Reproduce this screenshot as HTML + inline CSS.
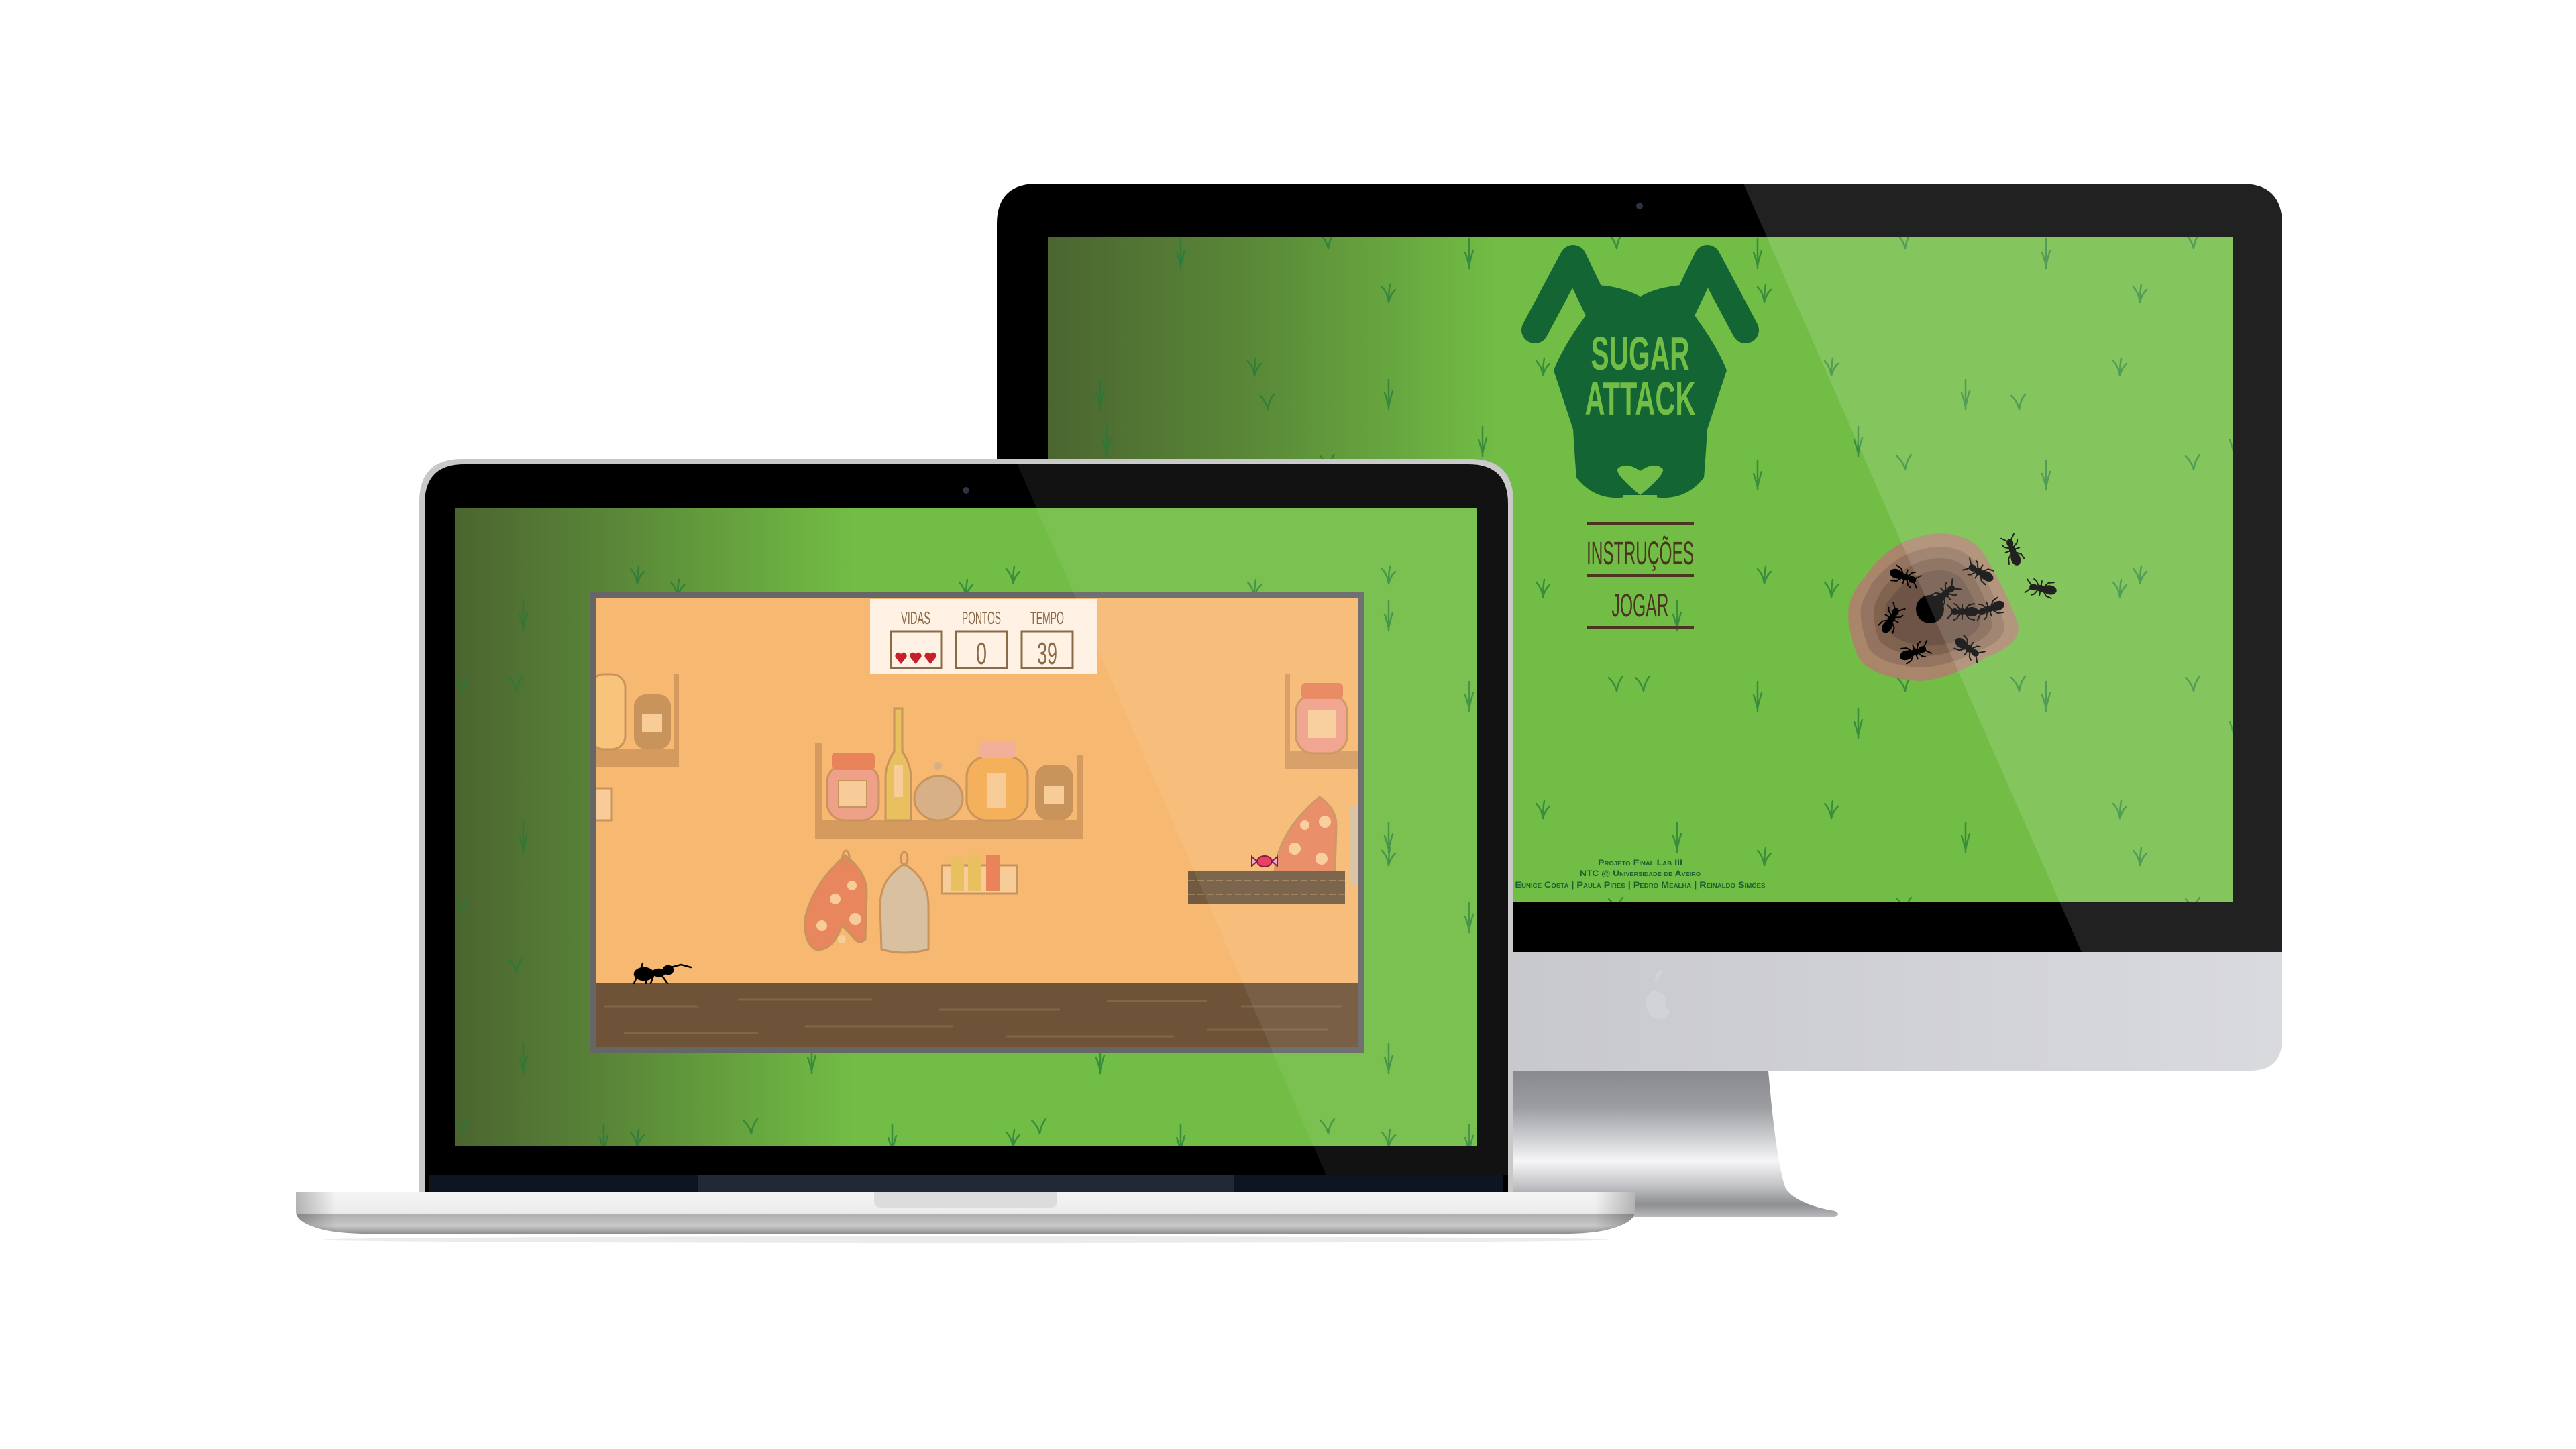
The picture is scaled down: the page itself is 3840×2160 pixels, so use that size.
<!DOCTYPE html>
<html><head><meta charset="utf-8"><style>
html,body{margin:0;padding:0;background:#fff;}
svg{display:block;}
text{font-family:"Liberation Sans",sans-serif;}
</style></head><body>
<svg width="3840" height="2160" viewBox="0 0 3840 2160" xmlns="http://www.w3.org/2000/svg">
<defs>
  <linearGradient id="gI" x1="1562" x2="3327" y1="0" y2="0" gradientUnits="userSpaceOnUse">
    <stop offset="0" stop-color="#4b6530"/><stop offset="0.18" stop-color="#5a8a38"/><stop offset="0.38" stop-color="#72bd45"/><stop offset="1" stop-color="#72bd45"/>
  </linearGradient>
  <linearGradient id="gL" x1="679" x2="2201" y1="0" y2="0" gradientUnits="userSpaceOnUse">
    <stop offset="0" stop-color="#4b6530"/><stop offset="0.18" stop-color="#5c8c39"/><stop offset="0.39" stop-color="#72bd45"/><stop offset="1" stop-color="#72bd45"/>
  </linearGradient>
  <linearGradient id="chin" x1="0" x2="1" y1="0" y2="0">
    <stop offset="0" stop-color="#bcbdc1"/><stop offset="1" stop-color="#d9dade"/>
  </linearGradient>
  <linearGradient id="stand" x1="0" x2="0" y1="1596" y2="1813" gradientUnits="userSpaceOnUse">
    <stop offset="0" stop-color="#88898d"/><stop offset="0.25" stop-color="#9c9da1"/><stop offset="0.5" stop-color="#d6d7da"/><stop offset="0.62" stop-color="#f6f6f8"/><stop offset="0.8" stop-color="#bfc0c3"/><stop offset="0.92" stop-color="#8e8f93"/><stop offset="1" stop-color="#b8b8bb"/>
  </linearGradient>
  <linearGradient id="base" x1="0" x2="0" y1="1777" y2="1840" gradientUnits="userSpaceOnUse">
    <stop offset="0" stop-color="#f4f4f4"/><stop offset="0.5" stop-color="#ececec"/><stop offset="0.53" stop-color="#b0b0b0"/><stop offset="0.8" stop-color="#c8c8c8"/><stop offset="1" stop-color="#8a8a8a"/>
  </linearGradient>
  <linearGradient id="baseSide" x1="441" x2="2437" y1="0" y2="0" gradientUnits="userSpaceOnUse">
    <stop offset="0" stop-color="#000" stop-opacity="0.25"/><stop offset="0.03" stop-color="#000" stop-opacity="0"/><stop offset="0.97" stop-color="#000" stop-opacity="0"/><stop offset="1" stop-color="#000" stop-opacity="0.25"/>
  </linearGradient>
  <g id="b1" fill="none" stroke="#1f7a3a" stroke-width="2.5" stroke-linecap="round">
    <path d="M0 0 L0 -44 M0 -4 Q-3 -16 -6 -24 M0 -4 Q3 -18 6 -27"/>
  </g>
  <g id="b2" fill="none" stroke="#1f7a3a" stroke-width="2.5" stroke-linecap="round">
    <path d="M0 0 Q-3 -12 -12 -20 M0 0 Q2 -14 9 -22"/>
  </g>
  <g id="b3" fill="none" stroke="#1f7a3a" stroke-width="2.5" stroke-linecap="round">
    <path d="M0 0 Q-2 -14 -10 -22 M0 0 Q0 -16 2 -26 M0 0 Q3 -12 10 -18"/>
  </g>
  <pattern id="grass" x="0" y="0" width="430" height="330" patternUnits="userSpaceOnUse">
    <use href="#b1" x="40" y="70"/><use href="#b2" x="260" y="40"/><use href="#b3" x="150" y="230"/><use href="#b1" x="350" y="280"/>
  </pattern>
  <pattern id="grass2" x="110" y="60" width="560" height="420" patternUnits="userSpaceOnUse">
    <use href="#b2" x="100" y="130"/><use href="#b1" x="420" y="200"/><use href="#b3" x="280" y="390"/>
  </pattern>
  <g id="ant" fill="#000" stroke="#000" stroke-width="2" stroke-linecap="round">
    <ellipse cx="-14" cy="0" rx="9" ry="6"/><ellipse cx="0" cy="0" rx="6" ry="4"/><ellipse cx="11" cy="0" rx="5" ry="4"/>
    <path d="M-2 0 L-10 -10 L-18 -12 M-2 0 L-10 10 L-18 12 M0 0 L0 -11 M0 0 L0 11 M2 0 L8 -10 L12 -12 M2 0 L8 10 L12 12 M14 -2 L22 -10 M14 2 L22 10" fill="none"/>
  </g>
  <clipPath id="cI"><path d="M1546 274 H3342 Q3402 274 3402 334 V1419 H1486 V334 Q1486 274 1546 274 Z"/></clipPath>
  <clipPath id="cL"><path d="M689 688 H2192 Q2252 688 2252 748 V1777 H629 V748 Q629 688 689 688 Z"/></clipPath>
  <clipPath id="cIS"><rect x="1562" y="353" width="1766" height="992"/></clipPath>
  <clipPath id="cG"><rect x="889" y="891" width="1135" height="670"/></clipPath>
</defs>

<path d="M2253 1596 L2636 1596 Q2648 1735 2662 1772 Q2680 1796 2735 1805 Q2745 1810 2735 1814 L2253 1814 Z" fill="url(#stand)"/>
<path d="M1486 1400 H3402 V1548 Q3402 1596 3354 1596 H1534 Q1486 1596 1486 1548 Z" fill="url(#chin)"/>
<path d="M2466 1465 q10 -8 13 -20 q-12 2 -13 20 z M2462 1478 q-14 8 -5 30 q8 14 15 10 q10 4 18 -10 q-12 -8 -6 -20 q-8 -12 -22 -10 z" fill="#d2d3d7"/>
<path d="M1546 274 H3342 Q3402 274 3402 334 V1419 H1486 V334 Q1486 274 1546 274 Z" fill="#000"/>
<circle cx="2444" cy="307" r="5" fill="#2a3340"/>
<rect x="1562" y="353" width="1766" height="992" fill="url(#gI)"/>
<g clip-path="url(#cIS)">
  <rect x="1562" y="353" width="1766" height="992" fill="url(#grass)" opacity="0.7"/>
  <rect x="1562" y="353" width="1766" height="992" fill="url(#grass2)" opacity="0.7"/>
  <path d="M2288 492 L2345 385 L2382 462" fill="none" stroke="#146534" stroke-width="40" stroke-linecap="round" stroke-linejoin="round"/>
  <path d="M2602 492 L2545 385 L2508 462" fill="none" stroke="#146534" stroke-width="40" stroke-linecap="round" stroke-linejoin="round"/>
  <path d="M2383 425 Q2420 428 2445 442 Q2470 428 2507 425 L2515 455 Q2560 515 2574 552 L2545 640 Q2542 690 2540 712 Q2510 750 2460 740 L2430 740 Q2380 750 2350 712 Q2348 690 2345 640 L2316 552 Q2330 515 2375 455 Z" fill="#146534"/>
  <path d="M2445 738 Q2405 705 2412 698 Q2425 688 2445 702 Q2465 688 2478 698 Q2485 705 2445 738 Z" fill="#72bd45"/>
  <rect x="2420" y="738" width="50" height="10" fill="#72bd45"/>
  <text x="2445" y="551" text-anchor="middle" font-size="70" font-weight="bold" fill="#72bd45" textLength="147" lengthAdjust="spacingAndGlyphs">SUGAR</text>
  <text x="2445" y="618" text-anchor="middle" font-size="70" font-weight="bold" fill="#72bd45" textLength="165" lengthAdjust="spacingAndGlyphs">ATTACK</text>
  <rect x="2365" y="778" width="160" height="4" fill="#4b3520"/>
  <rect x="2365" y="856" width="160" height="4" fill="#4b3520"/>
  <rect x="2365" y="933" width="160" height="4" fill="#4b3520"/>
  <text x="2445" y="841" text-anchor="middle" font-size="48" fill="#4b3520" textLength="160" lengthAdjust="spacingAndGlyphs">INSTRUÇÕES</text>
  <text x="2445" y="919" text-anchor="middle" font-size="48" fill="#4b3520" textLength="85" lengthAdjust="spacingAndGlyphs">JOGAR</text>
  <path d="M2780 860 Q2820 800 2890 795 Q2940 795 2960 830 Q2990 880 3008 930 Q3015 960 2960 980 Q2900 1015 2860 1015 Q2790 1010 2770 980 Q2750 930 2757 900 Q2765 875 2780 860 Z" fill="#a9866a"/>
  <path d="M2790 870 Q2830 818 2890 815 Q2930 815 2950 845 Q2975 890 2988 930 Q2990 955 2950 970 Q2900 995 2860 995 Q2800 990 2785 965 Q2770 925 2775 900 Z" fill="#947460"/>
  <path d="M2805 880 Q2840 835 2890 832 Q2925 832 2942 860 Q2962 895 2970 930 Q2968 950 2935 962 Q2895 980 2860 978 Q2812 972 2800 952 Q2790 920 2795 900 Z" fill="#80634f"/>
  <path d="M2820 890 Q2850 852 2890 850 Q2920 850 2932 875 Q2950 905 2952 930 Q2945 948 2920 955 Q2890 965 2860 962 Q2825 955 2815 940 Q2808 915 2812 900 Z" fill="#6e5446"/>
  <circle cx="2877" cy="908" r="21" fill="#000"/>
  <use href="#ant" transform="translate(2840,860) rotate(20)"/>
  <use href="#ant" transform="translate(2820,922) rotate(-60)"/>
  <use href="#ant" transform="translate(2900,885) rotate(-40)"/>
  <use href="#ant" transform="translate(2925,912) rotate(180)"/>
  <use href="#ant" transform="translate(2965,908) rotate(160)"/>
  <use href="#ant" transform="translate(2855,972) rotate(-20)"/>
  <use href="#ant" transform="translate(2935,967) rotate(35)"/>
  <use href="#ant" transform="translate(2950,852) rotate(-150)"/>
  <use href="#ant" transform="translate(3000,820) rotate(-110)"/>
  <use href="#ant" transform="translate(3042,877) rotate(-170)"/>
  <g font-size="12" font-weight="bold" fill="#1a5f2f" text-anchor="middle" style="font-variant:small-caps">
    <text x="2445" y="1290" textLength="126" lengthAdjust="spacingAndGlyphs">Projeto Final Lab III</text>
    <text x="2445" y="1306" textLength="180" lengthAdjust="spacingAndGlyphs">NTC @ Universidade de Aveiro</text>
    <text x="2445" y="1323" textLength="373" lengthAdjust="spacingAndGlyphs">Eunice Costa | Paula Pires | Pedro Mealha | Reinaldo Simões</text>
  </g>
</g>
<polygon points="2599,274 3402,274 3402,1419 3103,1419" fill="#fff" opacity="0.13" clip-path="url(#cI)"/>

<path d="M689 684 H2192 Q2256 684 2256 748 V1780 H625 V748 Q625 684 689 684 Z" fill="#c8c8c8"/>
<path d="M692 692 H2189 Q2248 692 2248 751 V1777 H633 V751 Q633 692 692 692 Z" fill="#000"/>
<rect x="640" y="1752" width="1601" height="25" fill="#0d1620"/>
<rect x="1040" y="1752" width="800" height="25" fill="#212934"/>
<circle cx="1440" cy="731" r="5" fill="#2a3340"/>
<rect x="679" y="757" width="1522" height="952" fill="url(#gL)"/>
<rect x="679" y="757" width="1522" height="952" fill="url(#grass)" opacity="0.7"/>
<rect x="679" y="757" width="1522" height="952" fill="url(#grass2)" opacity="0.7"/>

<rect x="880" y="882" width="1153" height="688" fill="#666"/>
<rect x="889" y="891" width="1135" height="670" fill="#f7b872"/>
<g clip-path="url(#cG)">
  <rect x="880" y="1117" width="132" height="26" fill="#d49a5e"/>
  <rect x="1004" y="1005" width="8" height="115" fill="#d49a5e"/>
  <rect x="880" y="1005" width="52" height="112" rx="20" fill="#f8c47c" stroke="#c9935c" stroke-width="3"/>
  <rect x="945" y="1035" width="55" height="82" rx="18" fill="#c9935c"/>
  <rect x="957" y="1065" width="30" height="26" fill="#f8cc98"/>
  <rect x="880" y="1175" width="32" height="48" fill="#f8cc98" stroke="#c9935c" stroke-width="3"/>
  <rect x="1215" y="1223" width="400" height="27" fill="#d49a5e"/>
  <rect x="1215" y="1108" width="10" height="118" fill="#d49a5e"/>
  <rect x="1605" y="1125" width="10" height="100" fill="#d49a5e"/>
  <rect x="1233" y="1140" width="77" height="83" rx="26" fill="#efa088" stroke="#c9935c" stroke-width="3"/>
  <rect x="1240" y="1122" width="64" height="26" rx="6" fill="#e8835a"/>
  <rect x="1250" y="1163" width="42" height="40" fill="#f8cc98" stroke="#c9935c" stroke-width="2"/>
  <path d="M1333 1056 L1345 1056 L1345 1120 Q1358 1140 1358 1160 L1358 1223 L1320 1223 L1320 1160 Q1320 1140 1333 1120 Z" fill="#e8c060" stroke="#c9935c" stroke-width="3"/>
  <rect x="1332" y="1140" width="14" height="48" fill="#f8cc98"/>
  <ellipse cx="1399" cy="1190" rx="36" ry="33" fill="#d8b088" stroke="#c9935c" stroke-width="3"/>
  <circle cx="1398" cy="1142" r="6" fill="#d8b088"/>
  <rect x="1441" y="1128" width="91" height="95" rx="30" fill="#f5b05c" stroke="#c9935c" stroke-width="3"/>
  <rect x="1460" y="1105" width="54" height="25" rx="6" fill="#f2b098"/>
  <rect x="1472" y="1152" width="28" height="52" fill="#f8cc98"/>
  <rect x="1543" y="1140" width="57" height="83" rx="20" fill="#c9935c"/>
  <rect x="1556" y="1172" width="30" height="26" fill="#f8cc98"/>
  <path d="M1260 1275 Q1292 1300 1292 1330 L1290 1400 Q1280 1410 1270 1395 L1255 1380 Q1240 1420 1215 1415 Q1198 1405 1200 1370 Q1210 1320 1260 1275 Z" fill="#e8875e" stroke="#c9935c" stroke-width="3"/>
  <g fill="#f8cc98"><circle cx="1245" cy="1340" r="8"/><circle cx="1270" cy="1320" r="7"/><circle cx="1225" cy="1380" r="8"/><circle cx="1275" cy="1370" r="9"/><circle cx="1255" cy="1400" r="6"/></g>
  <ellipse cx="1261" cy="1278" rx="5" ry="10" fill="none" stroke="#c9935c" stroke-width="3"/>
  <path d="M1348 1288 Q1384 1310 1384 1350 L1384 1415 Q1348 1425 1314 1415 L1312 1350 Q1312 1310 1348 1288 Z" fill="#d9c0a0" stroke="#c9935c" stroke-width="3"/>
  <ellipse cx="1348" cy="1280" rx="5" ry="10" fill="none" stroke="#c9935c" stroke-width="3"/>
  <rect x="1404" y="1290" width="112" height="42" fill="#f8cc98" stroke="#c9935c" stroke-width="3"/>
  <rect x="1417" y="1278" width="20" height="50" fill="#e8c060"/><rect x="1443" y="1275" width="20" height="53" fill="#e8c060"/><rect x="1470" y="1275" width="20" height="53" fill="#e8835a"/>
  <rect x="1915" y="1120" width="115" height="26" fill="#d49a5e"/>
  <rect x="1915" y="1004" width="8" height="118" fill="#d49a5e"/>
  <rect x="1932" y="1035" width="76" height="88" rx="26" fill="#efa088" stroke="#c9935c" stroke-width="3"/>
  <rect x="1940" y="1018" width="62" height="24" rx="6" fill="#e8835a"/>
  <rect x="1950" y="1058" width="42" height="42" fill="#f8cc98"/>
  <path d="M1967 1188 Q1992 1205 1992 1230 L1990 1300 L1900 1300 Q1905 1240 1967 1188 Z" fill="#e8875e" stroke="#c9935c" stroke-width="3"/>
  <g fill="#f8cc98"><circle cx="1945" cy="1230" r="7"/><circle cx="1975" cy="1225" r="9"/><circle cx="1930" cy="1265" r="9"/><circle cx="1970" cy="1280" r="9"/></g>
  <rect x="2012" y="1200" width="20" height="120" rx="10" fill="#d9c0a0"/>
  <rect x="880" y="1466" width="1150" height="100" fill="#6e5339"/>
  <g stroke="#8a6a48" stroke-width="3" fill="none" opacity="0.8">
    <path d="M900 1500 h140 M1100 1490 h200 M1400 1505 h180 M1650 1492 h150 M1850 1500 h150 M930 1540 h200 M1200 1530 h220 M1500 1545 h250 M1800 1535 h180"/>
  </g>
  <rect x="1771" y="1299" width="234" height="48" fill="#715a40"/>
  <path d="M1771 1313 h234 M1771 1333 h234" stroke="#9a7c5a" stroke-width="2" stroke-dasharray="10 4"/>
  <ellipse cx="1885" cy="1284" rx="11" ry="8" fill="#e8325a" stroke="#7a1030" stroke-width="2"/>
  <path d="M1874 1284 L1866 1277 L1866 1291 Z M1896 1284 L1904 1277 L1904 1291 Z" fill="#e8a8e0" stroke="#7a1030" stroke-width="2"/>
  <g fill="#000" stroke="#000" stroke-width="2.5" stroke-linecap="round">
    <ellipse cx="960" cy="1452" rx="14" ry="9"/><ellipse cx="982" cy="1450" rx="9" ry="5"/><ellipse cx="996" cy="1446" rx="7" ry="6"/>
    <path d="M950 1455 L945 1466 M962 1456 L963 1466 M975 1452 L970 1466 M985 1452 L995 1466 M1000 1442 L1015 1438 L1030 1442 M955 1445 L958 1436" fill="none"/>
  </g>
  <rect x="1297" y="893" width="339" height="112" fill="#fff1e3"/>
  <g font-size="26" fill="#8a6a48" text-anchor="middle">
    <text x="1365" y="930" textLength="44" lengthAdjust="spacingAndGlyphs">VIDAS</text>
    <text x="1463" y="930" textLength="58" lengthAdjust="spacingAndGlyphs">PONTOS</text>
    <text x="1561" y="930" textLength="50" lengthAdjust="spacingAndGlyphs">TEMPO</text>
  </g>
  <g fill="none" stroke="#8a6a48" stroke-width="3">
    <rect x="1328" y="941" width="75" height="55"/><rect x="1425" y="941" width="76" height="55"/><rect x="1523" y="941" width="76" height="55"/>
  </g>
  <g fill="#c8202a">
    <path d="M1343 990 l-8 -10 a4.5 4.5 0 0 1 8 -5 a4.5 4.5 0 0 1 8 5 z"/>
    <path d="M1365 990 l-8 -10 a4.5 4.5 0 0 1 8 -5 a4.5 4.5 0 0 1 8 5 z"/>
    <path d="M1387 990 l-8 -10 a4.5 4.5 0 0 1 8 -5 a4.5 4.5 0 0 1 8 5 z"/>
  </g>
  <g font-size="46" fill="#8a6a48" text-anchor="middle">
    <text x="1463" y="990" textLength="16" lengthAdjust="spacingAndGlyphs">0</text>
    <text x="1561" y="990" textLength="30" lengthAdjust="spacingAndGlyphs">39</text>
  </g>
</g>
<polygon points="1515,688 2252,688 2252,1752 1977,1752" fill="#fff" opacity="0.07" clip-path="url(#cL)"/>

<path d="M441 1777 H2437 V1806 Q2437 1822 2400 1832 Q2380 1838 2340 1839 H540 Q500 1838 478 1832 Q441 1822 441 1806 Z" fill="url(#base)"/>
<path d="M441 1777 H2437 V1806 Q2437 1822 2400 1832 Q2380 1838 2340 1839 H540 Q500 1838 478 1832 Q441 1822 441 1806 Z" fill="url(#baseSide)"/>
<path d="M1303 1777 H1576 V1790 Q1576 1800 1566 1800 H1313 Q1303 1800 1303 1790 Z" fill="#dcdcdc"/>
<ellipse cx="1440" cy="1848" rx="960" ry="5" fill="#000" opacity="0.08"/>
</svg>
</body></html>
